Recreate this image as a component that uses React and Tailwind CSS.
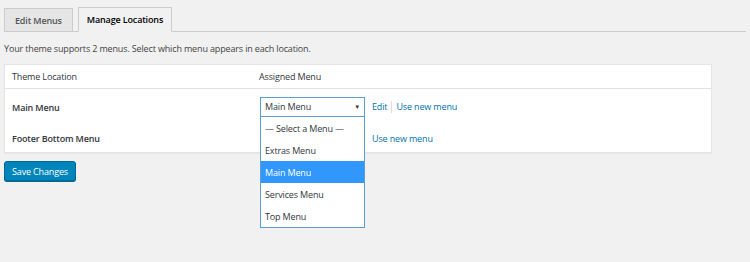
export default function App() {
  const font = { fontFamily: '"Open Sans", "Noto Sans", sans-serif' };
  return (
    <div className="w-[750px] h-[262px] bg-[#f1f1f1] text-[9px] tracking-[-0.15px] text-[#444] overflow-hidden" style={font}>
      <div className="px-[4px] pt-[8px]">
        <div className="flex gap-[5px] border-b border-[#ccc] h-[24px] items-end">
          <div className="h-[24px] -mb-px px-[10px] pt-[1px] flex items-center bg-[#e5e5e5] border border-[#ccc] text-[#555] font-semibold">Edit Menus</div>
          <div className="h-[25px] -mb-px px-[8px] pt-[1px] flex items-center bg-[#f1f1f1] border border-[#ccc] border-b-[#f1f1f1] text-[#000] font-semibold">Manage Locations</div>
        </div>
        <p className="mt-[10px] leading-[14px] text-[#444]">Your theme supports 2 menus. Select which menu appears in each location.</p>
        <div className="mt-[8px] w-[708px] bg-white border border-[#e5e5e5] shadow-[0_1px_1px_rgba(0,0,0,0.04)]">
          <div className="flex h-[24px] pt-[1px] items-center border-b border-[#e1e1e1] text-[#32373c]">
            <div className="w-[254px] pl-[7px]">Theme Location</div>
            <div>Assigned Menu</div>
          </div>
          <div className="flex h-[33px] pt-[2px] items-center text-[#32373c] font-semibold">
            <div className="w-[255px] pl-[7px] pt-[3px]">Main Menu</div>
            <div className="relative flex items-center">
              <div className="w-[105px] h-[20px] pt-[1px] border border-[#5b9dd9] bg-white flex items-center justify-between pl-[4px] pr-[4px] font-normal text-[#32373c]">
                <span>Main Menu</span>
                <span className="text-[6px] text-[#333]">▼</span>
              </div>
              <div className="absolute left-0 top-[20px] w-[105px] bg-white border border-[#5b9dd9] border-t-0 font-normal text-[#32373c] z-10">
                <div className="h-[22px] pt-[2px] flex items-center pl-[4px]">— Select a Menu —</div>
                <div className="h-[22px] pt-[2px] flex items-center pl-[4px]">Extras Menu</div>
                <div className="h-[22px] pt-[2px] flex items-center pl-[4px] bg-[#3297fd] text-white">Main Menu</div>
                <div className="h-[22px] pt-[2px] flex items-center pl-[4px]">Services Menu</div>
                <div className="h-[22px] pt-[2px] flex items-center pl-[4px]">Top Menu</div>
              </div>
              <div className="flex items-center ml-[7px] pt-[1px] font-normal text-[#0073aa]">
                <span>Edit</span>
                <span className="mx-[4px] w-px h-[12px] bg-[#ddd]"></span>
                <span>Use new menu</span>
              </div>
            </div>
          </div>
          <div className="flex h-[30px] pt-[4px] items-center text-[#32373c] font-semibold">
            <div className="w-[367px] pl-[7px]">Footer Bottom Menu</div>
            <div className="font-normal text-[#0073aa]">Use new menu</div>
          </div>
        </div>
        <button className="mt-[8px] h-[20px] px-[7px] pt-[1px] bg-[#0085ba] border border-[#006799] rounded-[3px] text-white text-[9px] shadow-[0_1px_0_#006799]" style={font}>Save Changes</button>
      </div>
    </div>
  );
}
